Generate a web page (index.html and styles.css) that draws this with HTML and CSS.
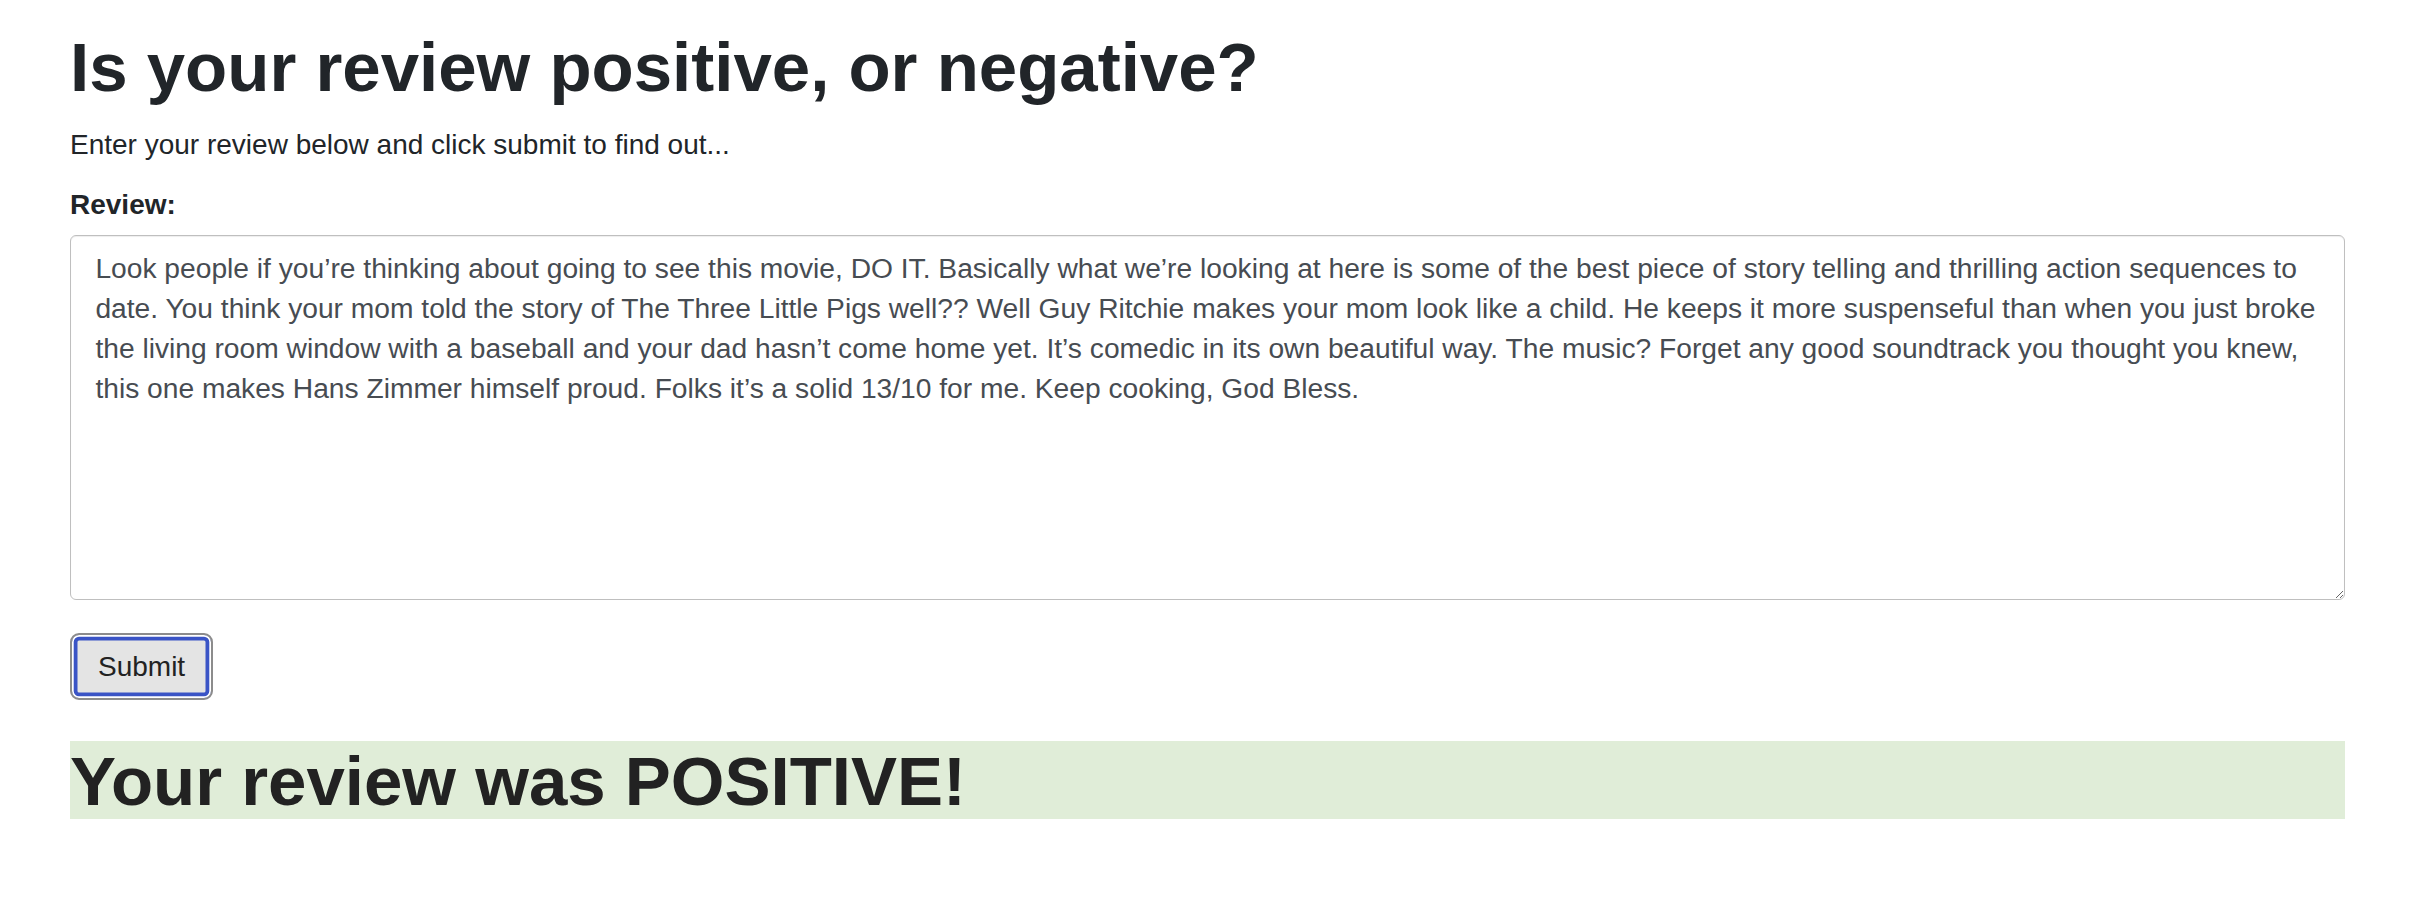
FILE: index.html
```html
<!DOCTYPE html>
<html lang="en">
<head>
<meta charset="utf-8">
<title>Review Sentiment</title>
<link rel="stylesheet" href="styles.css">
</head>
<body>
<main class="container">
  <h1 class="title">Is your review positive, or negative?</h1>
  <p class="lead">Enter your review below and click submit to find out...</p>
  <form class="review-form">
    <label class="field-label" for="review">Review:</label>
    <textarea id="review" class="review-input">Look people if you’re thinking about going to see this movie, DO IT. Basically what we’re looking at here is some of the best piece of story telling and thrilling action sequences to date. You think your mom told the story of The Three Little Pigs well?? Well Guy Ritchie makes your mom look like a child. He keeps it more suspenseful than when you just broke the living room window with a baseball and your dad hasn’t come home yet. It’s comedic in its own beautiful way. The music? Forget any good soundtrack you thought you knew, this one makes Hans Zimmer himself proud. Folks it’s a solid 13/10 for me. Keep cooking, God Bless.</textarea>
    <button type="button" class="submit-btn">Submit</button>
  </form>
  <h1 class="result">Your review was POSITIVE!</h1>
</main>
</body>
</html>
```

FILE: styles.css
```css
* {
  box-sizing: border-box;
}

html, body {
  margin: 0;
  padding: 0;
  background: #ffffff;
}

body {
  font-family: "Liberation Sans", Arial, Helvetica, sans-serif;
  font-size: 28px;
  line-height: 42px;
  color: #212529;
}

.container {
  width: 2275px;
  margin-left: 70px;
  padding-top: 26px;
  display: flex;
  flex-direction: column;
  align-items: stretch;
}

.title {
  margin: 0 0 15px 0;
  font-size: 69px;
  line-height: 83px;
  font-weight: 700;
  color: #212529;
}

.lead {
  margin: 0 0 18px 0;
}

.review-form {
  display: flex;
  flex-direction: column;
  align-items: flex-start;
}

.field-label {
  display: block;
  font-weight: 700;
  margin-bottom: 9px;
}

.review-input {
  display: block;
  width: 100%;
  height: 365px;
  margin: 0;
  padding: 12px 18px 10px 24.4px;
  font-family: inherit;
  font-size: 28.2px;
  line-height: 40px;
  color: #474c52;
  background: #ffffff;
  border: 1.5px solid #bfbfbf;
  border-radius: 6px;
  box-shadow: inset 0 1px 1px rgba(0, 0, 0, 0.07);
  outline: none;
  resize: vertical;
}

.submit-btn {
  margin-top: 33px;
  height: 67px;
  padding: 0 26px;
  font-family: inherit;
  font-size: 28px;
  line-height: 42px;
  color: #222222;
  background: #e4e4e4;
  border: 2px solid #8c8c8c;
  border-radius: 9px;
  box-shadow: inset 0 0 0 1.7px #ffffff, inset 0 0 0 5.5px #3a54c6;
  cursor: pointer;
}

.result {
  margin: 41px 0 0 0;
  height: 78px;
  padding-top: 4px;
  font-size: 69px;
  line-height: 74px;
  font-weight: 700;
  color: #222222;
  background: #e0edd8;
}
```
